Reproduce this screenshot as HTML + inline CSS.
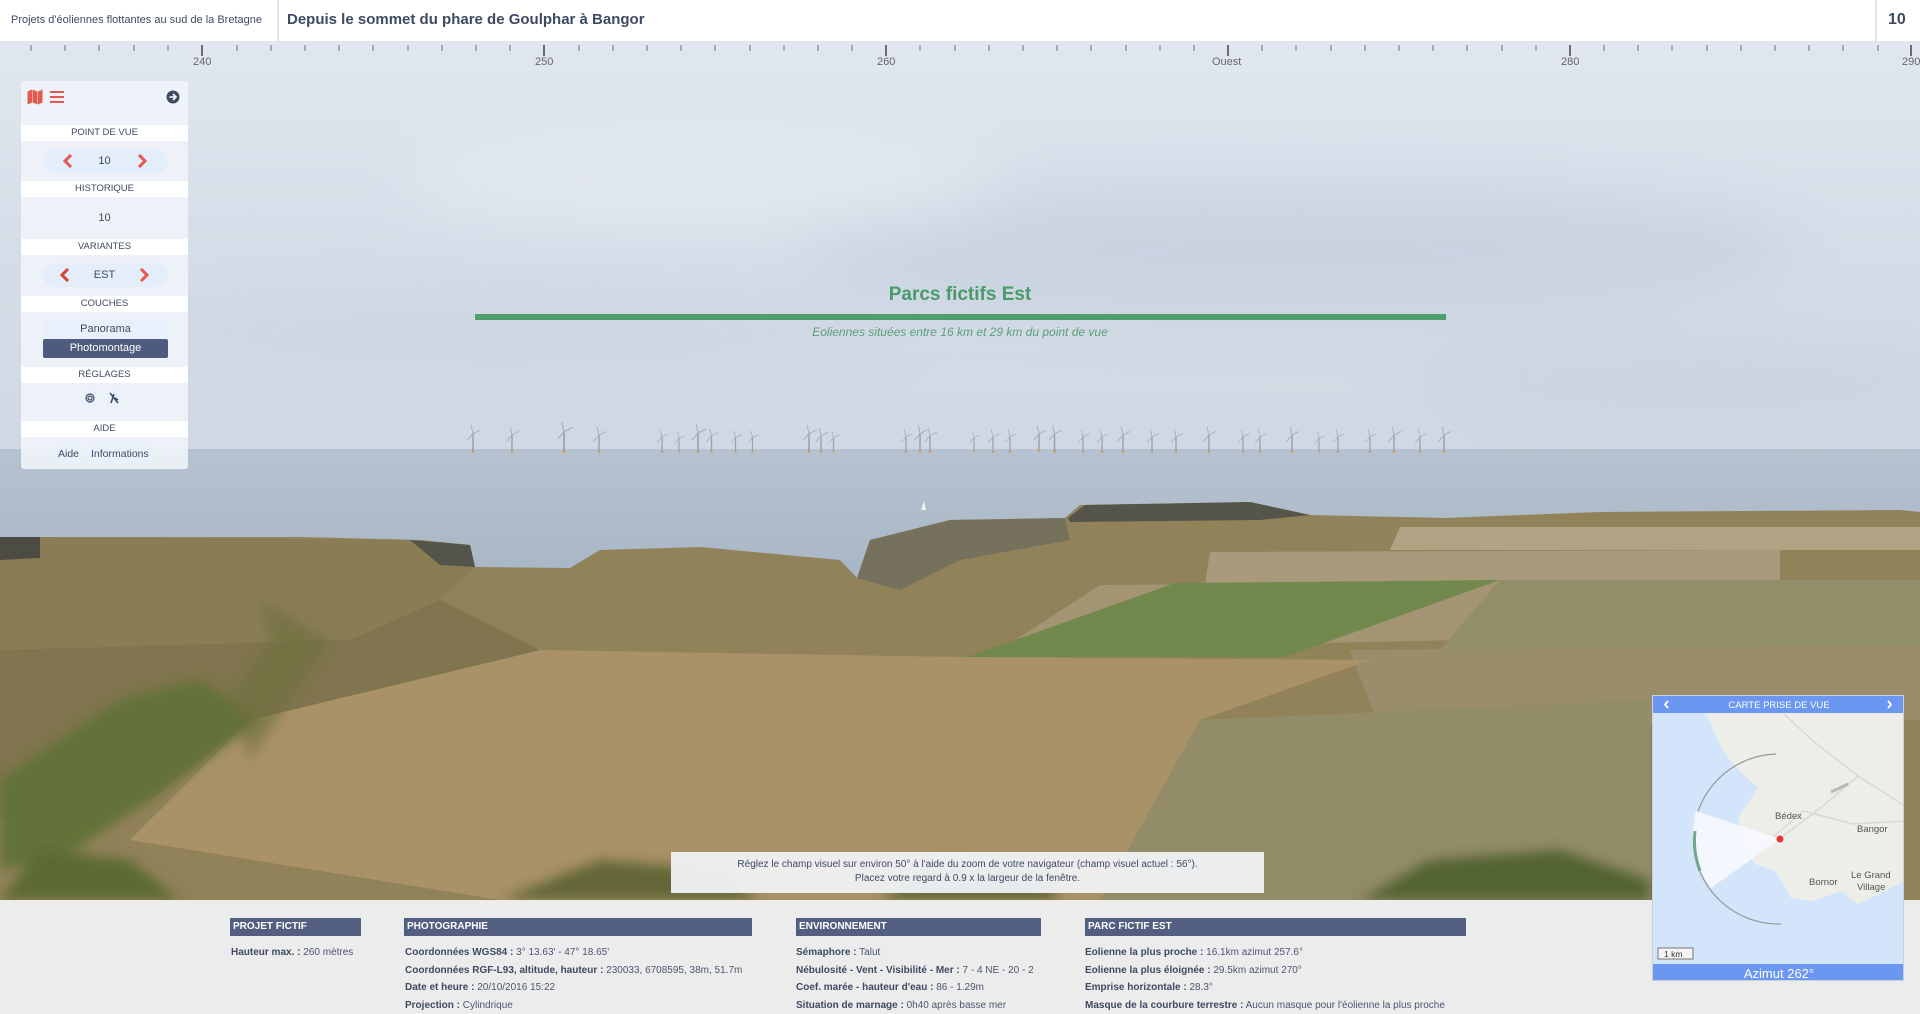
<!DOCTYPE html>
<html><head><meta charset="utf-8">
<style>
*{margin:0;padding:0;box-sizing:border-box}
body{width:1920px;height:1004px;overflow:hidden;font-family:"Liberation Sans",sans-serif;background:#ececec;position:relative;color:#4a5670}
.hdr{position:absolute;left:0;top:0;width:1920px;height:42px;background:#fff;border-bottom:1px solid #e4e6ea;z-index:5}
.hdr .a{position:absolute;left:11px;top:14px;font-size:11px;color:#3e4a62}
.hdr .d1{position:absolute;left:277px;top:0;width:2px;height:42px;background:#e3e5ea}
.hdr .b{position:absolute;left:287px;top:11px;font-size:15px;font-weight:bold;color:#3e4a62}
.hdr .d2{position:absolute;left:1875px;top:0;width:2px;height:42px;background:#e3e5ea}
.hdr .c{position:absolute;left:1888px;top:11px;font-size:16px;font-weight:bold;color:#3e4a62}
.pano{position:absolute;left:0;top:42px;width:1920px;height:858px;overflow:hidden}
.panel{position:absolute;left:21px;top:81px;width:167px;height:388px;background:rgba(240,244,250,.9);border-radius:3px;z-index:4;font-size:10px;text-align:center}
.band{position:absolute;left:0;width:167px;height:16px;background:#fff;font-size:9.5px;line-height:16px;color:#3e4a62}
.pn{position:absolute;font-size:11px;color:#3e4a62}
.btn{position:absolute;left:22px;width:125px;height:19px;border-radius:2px;font-size:11px;line-height:19px}
.note{position:absolute;left:671px;top:852px;width:593px;height:41px;background:rgba(240,242,246,.95);font-size:10px;text-align:center;line-height:14px;padding-top:6px;color:#3e4a62;z-index:4}
.sec{position:absolute;top:918px;height:18px;background:#525f80;color:#fff;font-size:10px;font-weight:bold;line-height:18px;padding-left:3px}
.txt{position:absolute;font-size:10px;line-height:17.5px;color:#4a5670;white-space:nowrap}
.txt b{color:#3e4a62}
.map{position:absolute;left:1652px;top:695px;width:252px;height:286px;background:#d4e6fa;z-index:4;overflow:hidden;border:1px solid #c8d0dc}
</style></head><body>
<div class="hdr"><div class="a">Projets d'éoliennes flottantes au sud de la Bretagne</div><div class="d1"></div><div class="b">Depuis le sommet du phare de Goulphar à Bangor</div><div class="d2"></div><div class="c">10</div></div>

<div class="pano">
<svg width="1920" height="858" viewBox="0 42 1920 858" xmlns="http://www.w3.org/2000/svg">
<defs>
<linearGradient id="sky" x1="0" y1="0" x2="0" y2="1"><stop offset="0" stop-color="#e0e7f0"/><stop offset=".5" stop-color="#d5dde8"/><stop offset="1" stop-color="#d0d8e3"/></linearGradient>
<linearGradient id="sea" x1="0" y1="0" x2="0" y2="1"><stop offset="0" stop-color="#b6c2d0"/><stop offset="1" stop-color="#a7b5c4"/></linearGradient>
<filter id="bl" x="-20%" y="-50%" width="140%" height="200%"><feGaussianBlur stdDeviation="30"/></filter>
<filter id="bl2"><feGaussianBlur stdDeviation="6"/></filter>
<symbol id="t" viewBox="0 0 20 30"><line x1="10" y1="10" x2="10" y2="28" stroke="#9aa1a9" stroke-width="1.6"/><line x1="10" y1="10" x2="8" y2="1" stroke="#a6acb3" stroke-width="1"/><line x1="10" y1="10" x2="18" y2="6" stroke="#a6acb3" stroke-width="1"/><line x1="10" y1="10" x2="4" y2="17" stroke="#a6acb3" stroke-width="1"/><rect x="8.5" y="27.5" width="3" height="2" fill="#c99a5a"/></symbol>
</defs>
<rect x="0" y="42" width="1920" height="410" fill="url(#sky)"/>
<g filter="url(#bl)" opacity=".45">
<ellipse cx="1300" cy="250" rx="500" ry="70" fill="#bcc8d8"/>
<ellipse cx="500" cy="330" rx="400" ry="40" fill="#c6d0dd"/>
<ellipse cx="1700" cy="380" rx="300" ry="40" fill="#c2ccd9"/>
<ellipse cx="700" cy="180" rx="300" ry="50" fill="#eef2f7"/>
</g>
<rect x="0" y="449" width="1920" height="140" fill="url(#sea)"/>
<path d="M0 537 L300 537 L420 540 L470 545 L475 567 L570 568 L600 550 L700 547 L840 560 L857 578 L870 540 L950 520 L1065 518 L1080 505 L1250 502 L1310 515 L1445 518 L1600 512 L1900 510 L1920 512 L1920 900 L0 900Z" fill="#92825a"/>
<path d="M0 537 L420 540 L470 545 L475 567 L440 600 L350 640 L0 650Z" fill="#8a7d55"/>
<path d="M857 578 L870 540 L950 520 L1065 518 L1070 540 L960 560 L900 590Z" fill="#75715c"/>
<path d="M1068 518 L1085 505 L1250 502 L1310 515 L1260 520 L1070 522Z" fill="#55554c"/>
<path d="M1400 527 L1920 527 L1920 550 L1390 550Z" fill="#b0a384"/>
<path d="M1210 552 L1780 550 L1780 583 L1205 585Z" fill="#a99a7c"/>
<path d="M1100 585 L1500 583 L1460 640 L1000 650Z" fill="#a59474"/>
<path d="M967 657 L1175 583 L1500 580 L1285 657Z" fill="#72894d"/>
<path d="M1500 580 L1920 580 L1920 645 L1440 650Z" fill="#918e6a"/>
<path d="M1350 650 L1920 645 L1920 720 L1380 730Z" fill="#998d6b"/>
<path d="M540 650 L960 657 L1370 660 L1200 720 L1100 900 L500 900 L130 840 L250 720Z" fill="#a99267"/>
<path d="M1200 720 L1650 700 L1650 900 L1100 900Z" fill="#938c69"/>
<path d="M0 650 L350 640 L440 600 L540 650 L250 720 L150 800 L0 820Z" fill="#80754e"/>
<g filter="url(#bl2)">
<path d="M0 780 L120 700 L200 680 L260 720 L150 800 L60 860 L0 870Z" fill="#627238"/>
<path d="M0 900 L40 850 L130 860 L180 900Z" fill="#5b6b32"/>
<path d="M500 900 L600 860 L720 870 L760 900Z" fill="#636639"/>
<path d="M880 900 L940 860 L1040 870 L1060 900Z" fill="#606637"/>
<path d="M1360 900 L1430 860 L1560 850 L1650 880 L1650 900Z" fill="#536333"/>
<path d="M260 600 L330 640 L290 700 L250 760 L230 700 L270 640Z" fill="#6c6e3c" opacity=".6"/>
</g>
<path d="M0 537 L40 537 L40 558 L0 560Z" fill="#4d4c44"/>
<path d="M410 540 L470 545 L475 567 L440 565Z" fill="#55544a"/>
<g>
<use href="#t" x="463" y="424" width="20" height="29"/><use href="#t" x="503" y="426" width="18" height="27"/><use href="#t" x="553" y="421" width="22" height="32"/><use href="#t" x="590" y="426" width="18" height="27"/><use href="#t" x="654" y="429" width="16" height="24"/><use href="#t" x="672" y="431" width="14" height="22"/><use href="#t" x="688" y="423" width="20" height="30"/><use href="#t" x="703" y="427" width="17" height="26"/><use href="#t" x="728" y="430" width="15" height="23"/><use href="#t" x="745" y="430" width="15" height="23"/><use href="#t" x="799" y="424" width="20" height="29"/><use href="#t" x="812" y="427" width="18" height="26"/><use href="#t" x="826" y="430" width="15" height="23"/><use href="#t" x="898" y="429" width="16" height="24"/><use href="#t" x="910" y="424" width="20" height="29"/><use href="#t" x="921" y="427" width="18" height="26"/><use href="#t" x="967" y="430" width="14" height="23"/><use href="#t" x="985" y="429" width="16" height="24"/><use href="#t" x="1002" y="429" width="16" height="24"/><use href="#t" x="1030" y="424" width="18" height="29"/><use href="#t" x="1045" y="424" width="19" height="29"/><use href="#t" x="1075" y="429" width="16" height="24"/><use href="#t" x="1094" y="429" width="16" height="24"/><use href="#t" x="1114" y="426" width="18" height="27"/><use href="#t" x="1144" y="429" width="16" height="24"/><use href="#t" x="1168" y="429" width="16" height="24"/><use href="#t" x="1200" y="426" width="18" height="27"/><use href="#t" x="1235" y="429" width="16" height="24"/><use href="#t" x="1252" y="429" width="16" height="24"/><use href="#t" x="1283" y="426" width="18" height="27"/><use href="#t" x="1312" y="431" width="14" height="22"/><use href="#t" x="1330" y="429" width="16" height="24"/><use href="#t" x="1362" y="429" width="16" height="24"/><use href="#t" x="1385" y="426" width="18" height="27"/><use href="#t" x="1412" y="429" width="16" height="24"/><use href="#t" x="1435" y="426" width="18" height="27"/>
</g>
<path d="M921 510 l3 -9 l2 9z" fill="#f3f3f3"/>
</svg>
<svg style="position:absolute;left:0;top:0" width="1920" height="30" xmlns="http://www.w3.org/2000/svg">
<g stroke="#6a6f78" stroke-width="1">
<path d="M31 3v6M65 3v6M99 3v6M134 3v6M168 3v6M237 3v6M271 3v6M305 3v6M339 3v6M373 3v6M408 3v6M442 3v6M476 3v6M510 3v6M579 3v6M613 3v6M647 3v6M681 3v6M715 3v6M750 3v6M784 3v6M818 3v6M852 3v6M920 3v6M955 3v6M989 3v6M1023 3v6M1057 3v6M1091 3v6M1126 3v6M1160 3v6M1194 3v6M1262 3v6M1296 3v6M1331 3v6M1365 3v6M1399 3v6M1433 3v6M1467 3v6M1502 3v6M1536 3v6M1604 3v6M1638 3v6M1672 3v6M1707 3v6M1741 3v6M1775 3v6M1809 3v6M1843 3v6M1878 3v6"/>
<path d="M202 3v11M544 3v11M886 3v11M1228 3v11M1570 3v11M1911 3v11" stroke="#444" stroke-width="1.5"/>
</g></svg>
<div style="position:absolute;top:14px;left:0;width:1920px;font-size:11px;color:#666">
<span style="position:absolute;left:193px">240</span><span style="position:absolute;left:535px">250</span><span style="position:absolute;left:877px">260</span><span style="position:absolute;left:1212px">Ouest</span><span style="position:absolute;left:1561px">280</span><span style="position:absolute;left:1902px">290</span></div>
<div style="position:absolute;left:0;top:242px;width:1920px;text-align:center;font-size:19px;font-weight:bold;color:#4a9a6a">Parcs fictifs Est</div>
<div style="position:absolute;left:475px;top:272px;width:971px;height:6px;background:#4f9e6e"></div>
<div style="position:absolute;left:0;top:283px;width:1920px;text-align:center;font-size:12px;font-style:italic;color:#5aa07a">Eoliennes situées entre 16 km et 29 km du point de vue</div>
</div>

<div class="panel">
<svg style="position:absolute;left:6px;top:8px" width="16" height="16" viewBox="0 0 16 16"><path d="M0.5 2.5l4.5-2v13l-4.5 2zM5.5 0.5l5 2v13l-5-2zM11 2.5l4.5-2v13l-4.5 2z" fill="#e55a4e"/></svg>
<svg style="position:absolute;left:29px;top:10px" width="14" height="12"><path d="M0 1h14M0 6h14M0 11h14" stroke="#e55a4e" stroke-width="2"/></svg>
<svg style="position:absolute;left:145px;top:9px" width="14" height="14"><circle cx="7" cy="7" r="6.5" fill="#3e4a62"/><path d="M3.5 7h6M7 4l3 3-3 3" stroke="#fff" stroke-width="1.6" fill="none"/></svg>
<div class="band" style="top:44px">POINT DE VUE</div>
<div style="position:absolute;left:22px;top:68px;width:125px;height:24px;border-radius:12px;background:#e4eefa"></div>
<svg style="position:absolute;left:42px;top:73px" width="10" height="14"><path d="M8 1L2 7l6 6" stroke="#e55a4e" stroke-width="3" fill="none"/></svg>
<div class="pn" style="left:0;width:167px;top:74px">10</div>
<svg style="position:absolute;left:116px;top:73px" width="10" height="14"><path d="M2 1l6 6-6 6" stroke="#e55a4e" stroke-width="3" fill="none"/></svg>
<div class="band" style="top:100px">HISTORIQUE</div>
<div class="pn" style="left:0;width:167px;top:131px">10</div>
<div class="band" style="top:158px">VARIANTES</div>
<div style="position:absolute;left:22px;top:182px;width:125px;height:24px;border-radius:12px;background:#e4eefa"></div>
<svg style="position:absolute;left:39px;top:187px" width="10" height="14"><path d="M8 1L2 7l6 6" stroke="#d8433a" stroke-width="3" fill="none"/></svg>
<div class="pn" style="left:0;width:167px;top:188px">EST</div>
<svg style="position:absolute;left:118px;top:187px" width="10" height="14"><path d="M2 1l6 6-6 6" stroke="#e55a4e" stroke-width="3" fill="none"/></svg>
<div class="band" style="top:215px">COUCHES</div>
<div class="btn" style="top:239px;background:#e8f1fb;color:#3e4a62">Panorama</div>
<div class="btn" style="top:258px;background:#4e5b7c;color:#fff">Photomontage</div>
<div class="band" style="top:286px">RÉGLAGES</div>
<div style="position:absolute;left:62px;top:309px;width:14px;height:16px;background:#e8f1fb"></div>
<svg style="position:absolute;left:64px;top:312px" width="10" height="10"><circle cx="5" cy="5" r="4" stroke="#3e4a62" stroke-width="1.2" fill="none"/><circle cx="5" cy="5" r="2" stroke="#3e4a62" stroke-width="1.2" fill="none"/></svg>
<div style="position:absolute;left:86px;top:309px;width:14px;height:16px;background:#e8f1fb"></div>
<svg style="position:absolute;left:88px;top:311px" width="10" height="12"><path d="M1 1l8 10M5 2l-3 9M6 6l3 2" stroke="#3e4a62" stroke-width="1.5" fill="none"/></svg>
<div class="band" style="top:340px">AIDE</div>
<div class="pn" style="left:34px;top:364px;font-size:10.5px;background:#e8f1fb;padding:3px 3px">Aide</div>
<div class="pn" style="left:67px;top:364px;font-size:10.5px;background:#e8f1fb;padding:3px 3px">Informations</div>
</div>

<div class="note">Réglez le champ visuel sur environ 50° à l'aide du zoom de votre navigateur (champ visuel actuel : 56°).<br>Placez votre regard à 0.9 x la largeur de la fenêtre.</div>

<div class="sec" style="left:230px;width:131px">PROJET FICTIF</div>
<div class="sec" style="left:404px;width:348px">PHOTOGRAPHIE</div>
<div class="sec" style="left:796px;width:245px">ENVIRONNEMENT</div>
<div class="sec" style="left:1085px;width:381px">PARC FICTIF EST</div>
<div class="txt" style="left:231px;top:944px"><b>Hauteur max. :</b> 260 mètres</div>
<div class="txt" style="left:405px;top:944px"><b>Coordonnées WGS84 :</b> 3° 13.63' - 47° 18.65'<br><b>Coordonnées RGF-L93, altitude, hauteur :</b> 230033, 6708595, 38m, 51.7m<br><b>Date et heure :</b> 20/10/2016 15:22<br><b>Projection :</b> Cylindrique</div>
<div class="txt" style="left:796px;top:944px"><b>Sémaphore :</b> Talut<br><b>Nébulosité - Vent - Visibilité - Mer :</b> 7 - 4 NE - 20 - 2<br><b>Coef. marée - hauteur d'eau :</b> 86 - 1.29m<br><b>Situation de marnage :</b> 0h40 après basse mer</div>
<div class="txt" style="left:1085px;top:944px"><b>Eolienne la plus proche :</b> 16.1km azimut 257.6°<br><b>Eolienne la plus éloignée :</b> 29.5km azimut 270°<br><b>Emprise horizontale :</b> 28.3°<br><b>Masque de la courbure terrestre :</b> Aucun masque pour l'éolienne la plus proche</div>

<div class="map">
<svg width="252" height="286" viewBox="0 0 252 286" xmlns="http://www.w3.org/2000/svg">
<rect width="252" height="286" fill="#d3e5fa"/>
<path d="M53 17 L252 17 L252 185 L205 208 L188 195 L160 205 L138 202 L122 175 L102 168 L88 140 L85 122 L100 100 L105 92 L90 78 L75 62 L65 45Z" fill="#eeeee8"/>
<path d="M130 17 L160 45 L205 80 L252 110 M205 80 L170 110 L130 140 M110 150 L150 115 L200 128 L252 125" stroke="#d9d9d3" stroke-width="1.5" fill="none"/>
<path d="M178 96 L195 88" stroke="#bdb8b8" stroke-width="3"/>
<path d="M123 58 A85 85 0 0 0 128 228" stroke="#9a9a9a" stroke-width="1.2" fill="none"/>
<path d="M127 143 L43 115 A88 88 0 0 0 58 192Z" fill="#f6f9fe" opacity=".92"/>
<path d="M42 135 A86 86 0 0 0 47 175" stroke="#6fa98a" stroke-width="3" fill="none"/>
<circle cx="127" cy="143" r="3.5" fill="#e33"/>
<text x="122" y="123" font-family="Liberation Sans,sans-serif" font-size="9.5" fill="#555">Bédex</text>
<text x="204" y="136" font-family="Liberation Sans,sans-serif" font-size="9.5" fill="#555">Bangor</text>
<text x="156" y="189" font-family="Liberation Sans,sans-serif" font-size="9.5" fill="#555">Bornor</text>
<text x="198" y="182" font-family="Liberation Sans,sans-serif" font-size="9.5" fill="#555">Le Grand</text>
<text x="204" y="194" font-family="Liberation Sans,sans-serif" font-size="9.5" fill="#555">Village</text>
<rect x="5" y="252" width="35" height="11" fill="#f4f4f4" stroke="#777"/>
<text x="11" y="261" font-family="Liberation Sans,sans-serif" font-size="8.5" fill="#333">1 km</text>
<rect width="252" height="17" fill="#6b97f0"/>
<text x="126" y="12" text-anchor="middle" font-family="Liberation Sans,sans-serif" font-size="9.5" fill="#fff">CARTE PRISE DE VUE</text>
<path d="M15 5l-3 3.5 3 3.5M235 5l3 3.5-3 3.5" stroke="#fff" stroke-width="1.8" fill="none"/>
<rect y="268" width="252" height="18" fill="#6b97f0"/>
<text x="126" y="282" text-anchor="middle" font-family="Liberation Sans,sans-serif" font-size="13" fill="#fff">Azimut 262°</text>
</svg>
</div>
</body></html>
